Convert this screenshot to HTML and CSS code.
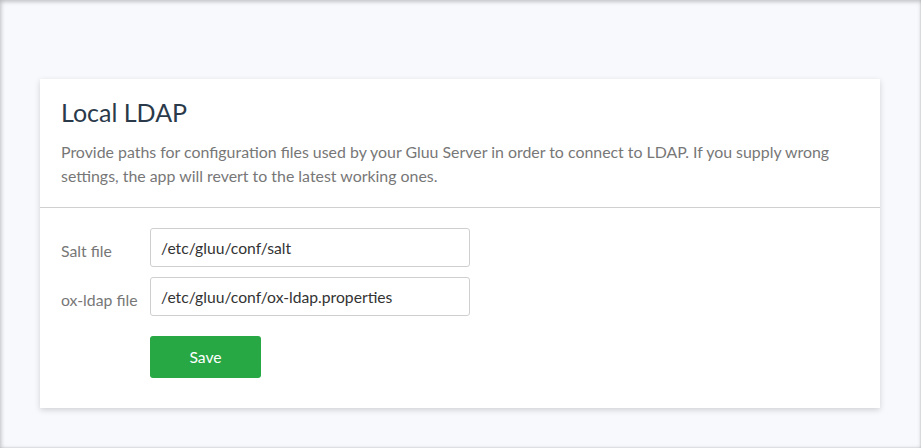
FILE: index.html
```html
<!DOCTYPE html>
<html>
<head>
<meta charset="utf-8">
<link rel="stylesheet" href="styles.css">
</head>
<body>
<div class="page">
  <div class="card">
    <div class="card-header">
      <h1 class="title">Local LDAP</h1>
      <p class="desc">Provide paths for configuration files used by your Gluu Server in order to connect to LDAP. If you supply wrong settings, the app will revert to the latest working ones.</p>
    </div>
    <div class="card-body">
      <div class="row">
        <label class="label">Salt file</label>
        <input class="input" type="text" value="/etc/gluu/conf/salt">
      </div>
      <div class="row">
        <label class="label">ox-ldap file</label>
        <input class="input" type="text" value="/etc/gluu/conf/ox-ldap.properties">
      </div>
      <div class="row actions">
        <button class="btn">Save</button>
      </div>
    </div>
  </div>
</div>
</body>
</html>
```
FILE: styles.css
```css
* { box-sizing: border-box; }
html, body { margin: 0; padding: 0; }
body {
  font-family: Lato, "Open Sans", sans-serif;
  background: #f8f9fd;
}
.page {
  height: 448px;
  padding: 79px 0 0 40px;
  background: #f8f9fd;
  box-shadow: inset 0 2px 4px rgba(0,0,0,0.18), inset 2px 0 4px rgba(0,0,0,0.10), inset -1px -1px 1px rgba(0,0,0,0.05);
}
.card {
  width: 840px;
  background: #fff;
  box-shadow: 0 2px 6px rgba(0,0,0,0.16);
}
.card-header {
  padding: 18px 21px 19px 21px;
  border-bottom: 1px solid #d0d0d0;
}
.title {
  margin: 0;
  font-size: 25px;
  line-height: 30px;
  font-weight: 400;
  color: #2b3a4a;
}
.desc {
  margin: 13px 0 0 0;
  font-size: 15.9px;
  line-height: 24px;
  color: #777;
}
.card-body {
  padding: 20px 21px 30px 21px;
  display: flex;
  flex-direction: column;
  gap: 10px;
}
.row {
  display: flex;
  align-items: center;
}
.label {
  width: 89px;
  padding-top: 6px;
  font-size: 15.8px;
  color: #777;
}
.input {
  width: 320px;
  height: 39px;
  padding: 0 10px;
  border: 1px solid #cfcfcf;
  border-radius: 3px;
  font-family: Lato, "Open Sans", sans-serif;
  font-size: 15.7px;
  color: #333;
  background: #fff;
  outline: none;
}
.actions {
  margin-top: 10px;
  padding-left: 89px;
}
.btn {
  width: 111px;
  height: 42px;
  border: none;
  border-radius: 3px;
  background: #28a745;
  color: #fff;
  font-family: Lato, "Open Sans", sans-serif;
  font-size: 15.7px;
  cursor: pointer;
}
```
